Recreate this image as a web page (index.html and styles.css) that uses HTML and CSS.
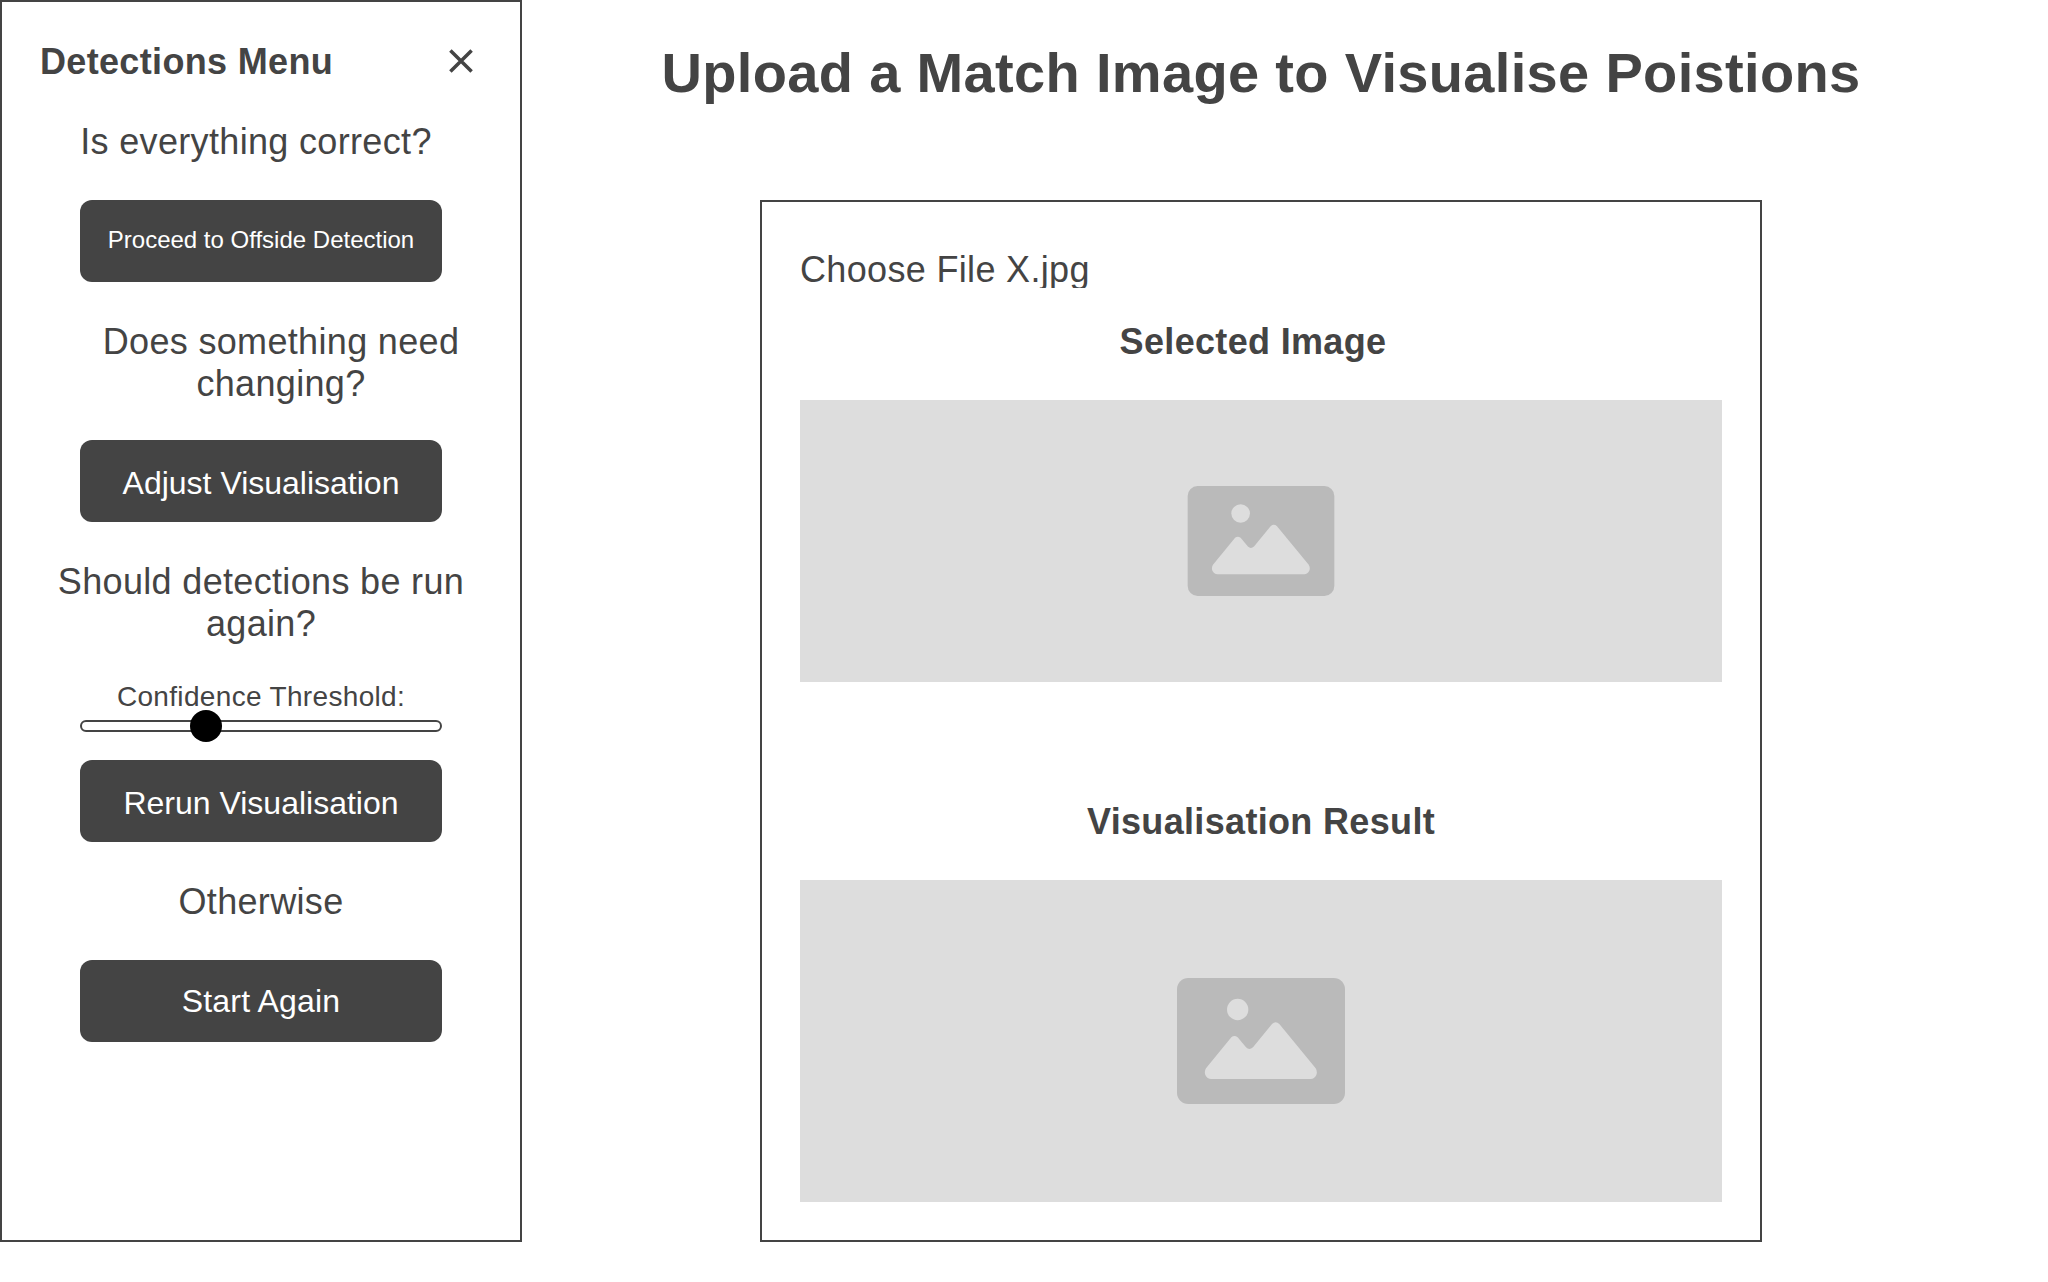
FILE: index.html
```html
<!DOCTYPE html>
<html lang="en">
<head>
<meta charset="utf-8">
<title>Detections</title>
<link rel="stylesheet" href="styles.css">
</head>
<body>
<svg class="defs" aria-hidden="true">
  <symbol id="picture" viewBox="0 0 504 378">
    <rect width="504" height="378" rx="34" fill="#bababa"/>
    <circle cx="182" cy="94.500" r="32" fill="#ddd"/>
    <path fill="#ddd" d="M87 271L163 178Q172 170 182 178L207 208Q217 218 228 208L285 138Q296 128 307 138L416 271Q422 281 418 291Q412 303 401 303H102Q91 303 85 291Q81 281 87 271Z"/>
  </symbol>
</svg>
<div class="page">
  <aside class="sidebar">
    <header class="sidebar-head">
      <h2 class="heading">Detections Menu</h2>
      <svg class="close" viewBox="0 0 24 24"><path d="M1.400 1.400L22.600 22.600M22.600 1.400L1.400 22.600"/></svg>
    </header>
    <p class="question question-first">Is everything correct?</p>
    <button class="btn btn-small">Proceed to Offside Detection</button>
    <p class="question question-change">Does something need changing?</p>
    <button class="btn">Adjust Visualisation</button>
    <p class="question question-rerun">Should detections be run again?</p>
    <label class="slider-label">Confidence Threshold:</label>
    <div class="slider"><span class="knob"></span></div>
    <button class="btn">Rerun Visualisation</button>
    <p class="question">Otherwise</p>
    <button class="btn btn-start">Start Again</button>
  </aside>
  <main class="main">
    <h1 class="title">Upload a Match Image to Visualise Poistions</h1>
    <section class="panel">
      <div class="file">Choose File X.jpg</div>
      <h2 class="heading heading-selected">Selected Image</h2>
      <div class="placeholder selected"><svg class="icon"><use href="#picture"/></svg></div>
      <h2 class="heading">Visualisation Result</h2>
      <div class="placeholder result"><svg class="icon"><use href="#picture"/></svg></div>
    </section>
  </main>
</div>
</body>
</html>
```
FILE: styles.css
```css
* { box-sizing: border-box; }
body {
  margin: 0;
  background: #fff;
  color: #444;
  font-family: "Liberation Sans", Arial, sans-serif;
  font-size: 36px;
  line-height: 42px;
  letter-spacing: 0.334px;
}
h1, h2, p { margin: 0; }
.defs { display: none; }
.page { display: flex; height: 1282px; }

.sidebar {
  width: 522px;
  height: 1242px;
  flex: none;
  border: 2px solid #444;
  padding: 38px 38px 0;
  display: flex;
  flex-direction: column;
  align-items: center;
}
.sidebar-head {
  align-self: stretch;
  display: flex;
  justify-content: space-between;
  height: 42px;
  margin-bottom: 38px;
  padding-right: 9px;
}
.heading {
  font-size: 36px;
  font-weight: 700;
  white-space: nowrap;
  padding-top: 1px;
}
.close {
  width: 24px;
  height: 24px;
  margin-top: 9px;
  fill: none;
  stroke: #444;
  stroke-width: 3.5;
}
.question { text-align: center; padding-top: 1px; margin-bottom: 37px; }
.question-first { margin-right: 10px; }
.question-change { width: 362px; margin: 0 -40px 35px 0; }
.question-rerun { width: 442px; margin-bottom: 36px; }
.btn {
  flex: none;
  width: 362px;
  height: 82px;
  margin: 0 0 38px;
  padding: 3px 0 0;
  border: 0;
  border-radius: 12px;
  background: #444;
  color: #fff;
  font: 32px/38px "Liberation Sans", Arial, sans-serif;
}
.btn-small { font-size: 24px; padding: 0 0 2px; }
.btn-start { padding: 0; letter-spacing: 0.17px; }
.slider-label { font-size: 28px; line-height: 32px; margin-bottom: 7px; }
.slider {
  position: relative;
  flex: none;
  width: 362px;
  height: 12px;
  border: 2px solid #444;
  border-radius: 6px;
  margin-bottom: 28px;
}
.knob {
  position: absolute;
  left: 108px;
  top: -12px;
  width: 32px;
  height: 32px;
  border-radius: 50%;
  background: #000;
}

.main {
  flex: 1;
  display: flex;
  flex-direction: column;
  align-items: center;
  padding: 41px 48px 0 0;
}
.title {
  font-size: 56px;
  line-height: 64px;
  height: 159px;
  white-space: nowrap;
}
.panel {
  width: 1002px;
  height: 1042px;
  border: 2px solid #444;
  padding: 47px 38px 0;
  display: flex;
  flex-direction: column;
  align-items: center;
}
.file { align-self: stretch; height: 39px; overflow: hidden; margin-bottom: 32px; }
.heading-selected { margin-right: 16px; }
.placeholder {
  align-self: stretch;
  display: flex;
  align-items: center;
  justify-content: center;
  background: #ddd;
  margin-top: 37px;
}
.selected { height: 282px; margin-bottom: 118px; }
.result { height: 322px; }
.selected .icon { width: 148px; height: 110px; }
.result .icon { width: 168px; height: 126px; }
```
